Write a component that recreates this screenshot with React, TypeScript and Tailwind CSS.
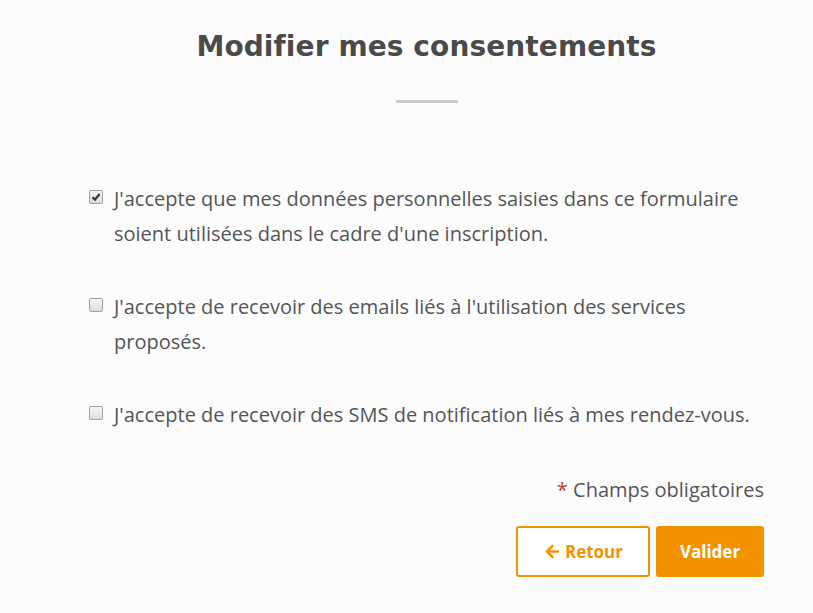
import { ArrowLeft } from "lucide-react";

const body = { fontFamily: '"Open Sans", "Liberation Sans", sans-serif' };

function Box({ checked }: { checked?: boolean }) {
  return (
    <span className="mt-[9px] flex h-[14px] w-[14px] shrink-0 items-center justify-center rounded-[2px] border border-[#a0a0a0] bg-gradient-to-b from-[#f6f6f6] to-[#dcdcdc]">
      {checked && (
        <svg width="10" height="10" viewBox="0 0 10 10">
          <path d="M1.5 5.2 L4 7.6 L8.6 2" fill="none" stroke="#333" strokeWidth="2.2" />
        </svg>
      )}
    </span>
  );
}

function Consent({ text, checked }: { text: string; checked?: boolean }) {
  return (
    <label className="flex items-start gap-[11px]">
      <Box checked={checked} />
      <span className="text-[20px] leading-[35px] text-[#555]">{text}</span>
    </label>
  );
}

export default function App() {
  return (
    <div className="min-h-[613px] w-full bg-[#fcfcfc]" style={body}>
      <div className="ml-[89px] flex w-[675px] flex-col pt-[29px]">
        <h1
          className="text-center text-[28px] font-bold leading-[36px] tracking-[0.1px] text-[#4a4a4a]"
          style={{ fontFamily: '"DejaVu Sans", "Open Sans", sans-serif' }}
        >
          Modifier mes consentements
        </h1>
        <div className="mx-auto mt-[35px] h-[3px] w-[62px] bg-[#cccccc]" />
        <div className="mt-[78px] flex flex-col gap-[38px]">
          <Consent
            checked
            text="J'accepte que mes données personnelles saisies dans ce formulaire soient utilisées dans le cadre d'une inscription."
          />
          <Consent text="J'accepte de recevoir des emails liés à l'utilisation des services proposés." />
          <Consent text="J'accepte de recevoir des SMS de notification liés à mes rendez-vous." />
        </div>
        <p className="mt-[40px] text-right text-[20px] leading-[35px] text-[#555]">
          <span className="text-[#c0392b]">*</span> Champs obligatoires
        </p>
        <div className="mt-[19px] flex justify-end gap-[6px]">
          <button className="flex h-[51px] w-[134px] items-center justify-center gap-[3px] rounded-[3px] border-2 border-[#f39200] bg-white text-[17px] font-bold text-[#f39200]">
            <ArrowLeft size={19} strokeWidth={3.2} />
            Retour
          </button>
          <button className="h-[51px] w-[108px] rounded-[3px] bg-[#f39200] text-[17px] font-bold text-white">
            Valider
          </button>
        </div>
      </div>
    </div>
  );
}
